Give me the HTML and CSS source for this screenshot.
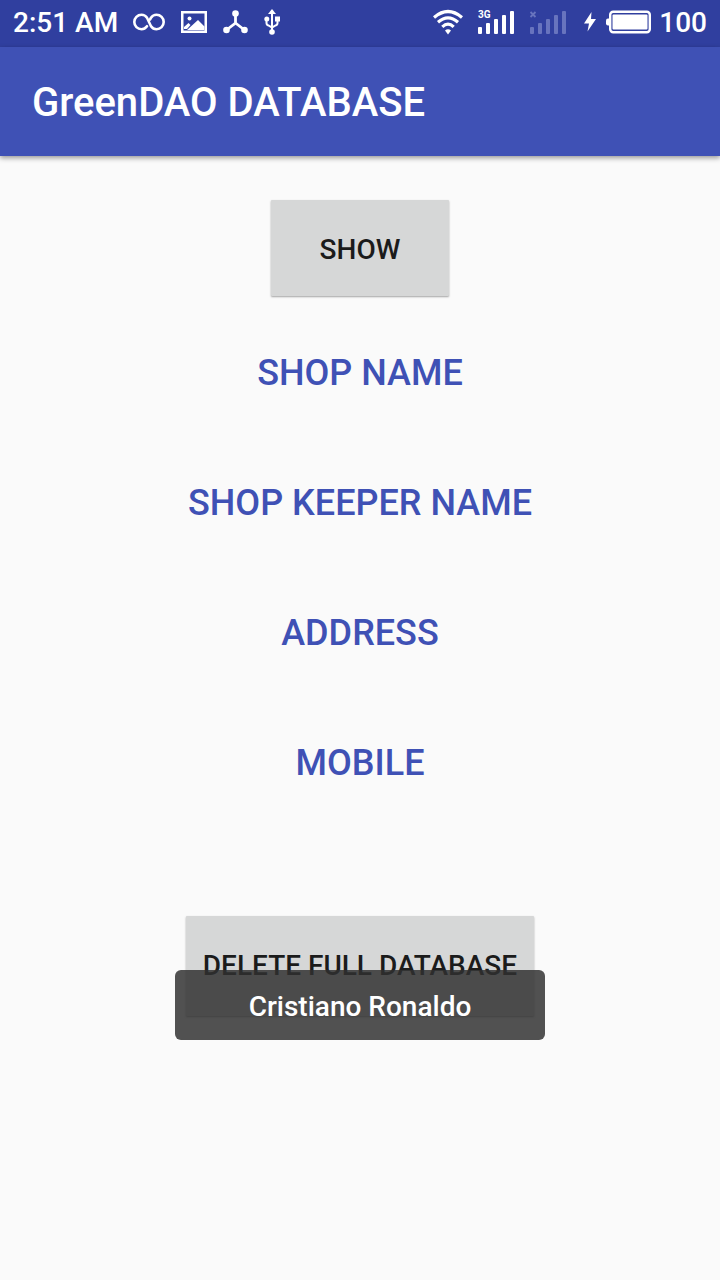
FILE: index.html
```html
<!DOCTYPE html>
<html lang="en">
<head>
<meta charset="utf-8">
<meta name="viewport" content="width=device-width, initial-scale=1">
<title>GreenDAO DATABASE</title>
<link rel="stylesheet" href="styles.css">
</head>
<body>
<div class="screen">
  <div class="status-bar">
    <div class="status-left">
      <span class="clock">2:51 AM</span>
      <svg class="icon" width="32" height="18" viewBox="0 0 32 18" fill="none" stroke="#fff" stroke-width="2.6" stroke-linecap="round" aria-hidden="true"><path d="M14 13.200C12.500 15.200 10.500 16.200 8.500 16.200A7.200 7.200 0 0 1 8.500 1.800C11 1.800 12.800 3 14 4.800L18 13.200C19.200 15 21 16.200 23.500 16.200A7.200 7.200 0 0 0 23.500 1.800C21 1.800 19.200 3 18 4.800L17 6.500"/></svg>
      <svg class="icon" width="26" height="22" viewBox="0 0 26 22" aria-hidden="true"><path fill="#fff" fill-rule="evenodd" d="M0 0H26V22H0ZM2.500 2.500V19.500H23.500V2.500Z"/><path fill="#fff" d="M3 16L7.500 12L9.500 14L6 18H3ZM6 19L17 9L23.500 15.500V19Z"/><circle cx="8.500" cy="7.500" r="2" fill="#fff"/></svg>
      <svg class="icon" width="25" height="24" viewBox="0 0 25 24" aria-hidden="true"><path d="M12.500 4V13L3.500 20M12.500 13L21.500 20" fill="none" stroke="#fff" stroke-width="2.800"/><g fill="#fff"><circle cx="12.500" cy="3.500" r="3.300"/><circle cx="3.500" cy="20" r="3.300"/><circle cx="21.500" cy="20" r="3.300"/></g></svg>
      <svg class="icon" width="16" height="26" viewBox="0 0 16 26" aria-hidden="true"><path fill="none" stroke="#fff" stroke-width="2" d="M8 4V23M2.500 10V14Q2.500 16 4.500 16.500L8 18.500L11.500 16.500Q13.500 16 13.500 14V10"/><g fill="#fff"><path d="M8 0L12 5H4Z"/><circle cx="2.800" cy="10" r="2.500"/><path d="M11 7.500H16V12.500H11Z"/><circle cx="8" cy="23" r="2.800"/></g></svg>
    </div>
    <div class="status-right">
      <svg class="icon" width="30" height="26" viewBox="0 0 30 26" aria-hidden="true"><g fill="none" stroke="#fff" stroke-width="3.200"><path d="M1 8.500Q15-3.500 29 8.500"/><path d="M5 13.200Q15 4.500 25 13.200"/><path d="M9.300 17.800Q15 12.500 20.700 17.800"/></g><path fill="#fff" d="M12 21.500Q15 18.800 18 21.500L15 25.500Z"/></svg>
      <svg class="icon" width="38" height="26" viewBox="0 0 38 26" aria-hidden="true"><g fill="#fff"><rect x="1" y="18" width="4" height="7" rx="1"/><rect x="9" y="14" width="4" height="11" rx="1"/><rect x="17" y="10" width="4" height="15" rx="1"/><rect x="25" y="6" width="4" height="19" rx="1"/><rect x="33" y="2" width="4" height="23" rx="1"/></g><text class="network" x="1" y="9">3G</text></svg>
      <svg class="icon" width="38" height="26" viewBox="0 0 38 26" aria-hidden="true"><g fill="#6874be"><rect x="1" y="18" width="4" height="7" rx="1"/><rect x="9" y="14" width="4" height="11" rx="1"/><rect x="17" y="10" width="4" height="15" rx="1"/><rect x="25" y="6" width="4" height="19" rx="1"/><rect x="33" y="2" width="4" height="23" rx="1"/></g><path d="M1.500 3L6.500 8M6.500 3L1.500 8" stroke="#6874be" stroke-width="1.800"/></svg>
      <svg class="icon bolt" width="14" height="20" viewBox="0 0 14 20" aria-hidden="true"><path fill="#fff" d="M8.500 0L1 11.500H6L4.500 19.500L13 7H8Z"/></svg>
      <svg class="icon" width="46" height="24" viewBox="0 0 46 24" aria-hidden="true"><rect x="4.200" y="1.700" width="39.600" height="20.600" rx="3" fill="none" stroke="#fff" stroke-width="2.400"/><path fill="#fff" d="M4 8.500H2Q0 8.500 0 10.500V13.500Q0 15.500 2 15.500H4Z"/><rect x="6.500" y="4.500" width="35" height="15" rx="1" fill="#fff"/></svg>
      <span class="battery-level">100</span>
    </div>
  </div>
  <header class="app-bar"><h1 class="title">GreenDAO DATABASE</h1></header>
  <main class="content">
    <button class="button show" type="button">SHOW</button>
    <div class="fields">
      <p class="field">SHOP NAME</p>
      <p class="field">SHOP KEEPER NAME</p>
      <p class="field">ADDRESS</p>
      <p class="field">MOBILE</p>
    </div>
    <button class="button delete" type="button">DELETE FULL DATABASE</button>
  </main>
  <div class="toast" role="status">Cristiano Ronaldo</div>
</div>
</body>
</html>
```
FILE: styles.css
```css
* {
  box-sizing: border-box;
}

body {
  margin: 0;
  background: #fafafa;
  font-family: Roboto, "Liberation Sans", sans-serif;
  font-weight: 500;
}

.screen {
  position: relative;
  min-height: 100vh;
}

.status-bar {
  display: flex;
  align-items: center;
  justify-content: space-between;
  padding: 6px 13px 8px;
  background: #303f9f;
  color: #fff;
  font-size: 28px;
  line-height: 33px;
}

.status-left,
.status-right {
  display: flex;
  align-items: center;
}

.status-left {
  gap: 16px;
}

.status-right {
  gap: 14px;
}

.icon {
  margin-bottom: 2px;
}

.clock {
  margin-right: -1px;
}

.bolt {
  margin-right: -5px;
  margin-left: 2px;
}

.battery-level {
  margin-left: -7px;
}

.network {
  fill: #fff;
  font-size: 10px;
  font-weight: 700;
}

.app-bar {
  padding: 32px 32px 29px;
  background: #3f51b5;
  color: #fff;
  box-shadow: 0 2px 5px rgba(0, 0, 0, 0.4);
}

.title {
  margin: 0;
  font-size: 40px;
  font-weight: 500;
  line-height: 48px;
}

.content {
  display: flex;
  flex-direction: column;
  align-items: center;
  padding: 44px 16px 32px;
}

.button {
  border: 0;
  border-radius: 1px;
  background: #d6d7d7;
  color: #1b1b1b;
  font: inherit;
  font-size: 28px;
  line-height: 33px;
  box-shadow: 0 1px 2px rgba(0, 0, 0, 0.35);
}

.show {
  min-width: 178px;
  padding: 33px 16px 30px;
}

.delete {
  min-width: 348px;
  padding: 33px 16px 34px;
}

.fields {
  display: grid;
  gap: 88px;
  padding: 56px 0 132px;
}

.field {
  margin: 0;
  color: #3f51b5;
  font-size: 36px;
  line-height: 42px;
  text-align: center;
}

.toast {
  position: absolute;
  bottom: 240px;
  left: 50%;
  min-width: 370px;
  padding: 20px 32px 17px;
  transform: translateX(-50%);
  border-radius: 6px;
  background: rgba(48, 48, 48, 0.84);
  color: #fff;
  font-size: 28px;
  line-height: 33px;
  text-align: center;
}
```
